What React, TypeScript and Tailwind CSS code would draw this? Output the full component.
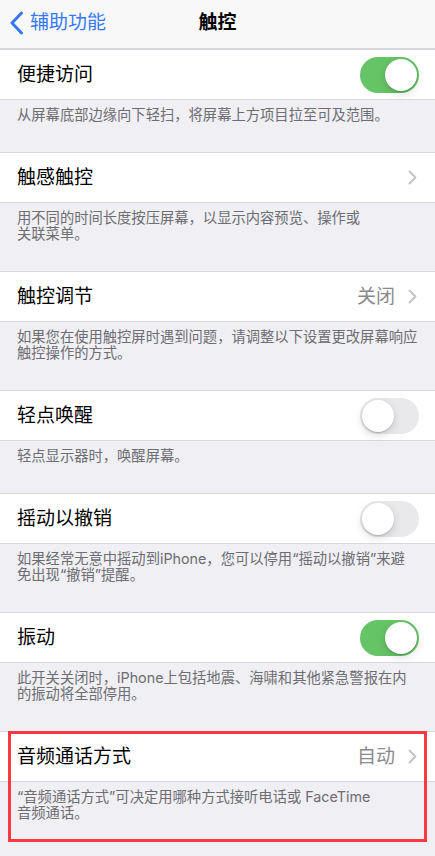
import React from 'react'

interface RowProps {
  title: string
  value?: string
  chevron?: boolean
  toggle?: boolean
}

interface SectionProps extends RowProps {
  lines: string[]
}

function Chevron(): React.JSX.Element {
  return (
    <svg width="9" height="15" viewBox="0 0 9 15" fill="none" aria-hidden="true">
      <path
        d="M1.5 1.5 L7.5 7.5 L1.5 13.5"
        stroke="#c4c4c7"
        strokeWidth="2"
        strokeLinecap="round"
        strokeLinejoin="round"
      />
    </svg>
  )
}

function Toggle({ on }: { on: boolean }): React.JSX.Element {
  return (
    <div
      className={
        on
          ? 'flex h-[36px] w-[59px] items-center justify-end rounded-full bg-[#65c466] p-[2px]'
          : 'flex h-[36px] w-[59px] items-center justify-start rounded-full bg-[#e9e9eb] p-[2px]'
      }
    >
      <div className="h-[32px] w-[32px] rounded-full bg-white shadow-[0_3px_8px_rgba(0,0,0,0.15),0_1px_1px_rgba(0,0,0,0.16)]" />
    </div>
  )
}

function Row({ title, value, chevron, toggle }: RowProps): React.JSX.Element {
  return (
    <div className="flex h-[51px] items-center border-y border-[#d9d9dd] bg-white pl-[17px] pr-[16px]">
      <span className="flex-1 pt-[2px] text-[19px] text-black">{title}</span>
      {value && (
        <span className="mr-[13px] pt-[2px] text-[19px] text-[#8a8a8e]">
          {value}
        </span>
      )}
      {chevron && (
        <span className="mr-[2px] flex items-center">
          <Chevron />
        </span>
      )}
      {toggle !== undefined && <Toggle on={toggle} />}
    </div>
  )
}

function Section({ lines, ...row }: SectionProps): React.JSX.Element {
  return (
    <section>
      <Row {...row} />
      <div className="px-[17px] pb-[29px] pt-[7px] text-[14.3px] leading-[16px] text-[#6d6d72]">
        {lines.map((line) => (
          <div key={line} className="whitespace-nowrap">
            {line}
          </div>
        ))}
      </div>
    </section>
  )
}

export default function App(): React.JSX.Element {
  return (
    <div className="min-h-screen w-[435px] bg-[#efeff4] font-['Inter','Noto_Sans_CJK_SC',sans-serif]">
      {/* navigation bar */}
      <header className="relative flex h-[49px] items-center border-b border-[#d9d9dd] bg-[#f8f8f9] pb-[2px]">
        <div className="flex items-center pl-[10px] text-[19px] text-[#3478f6]">
          <svg width="14" height="24" viewBox="0 0 14 24" fill="none" aria-hidden="true">
            <path
              d="M11.5 2 L2 12 L11.5 22"
              stroke="#3478f6"
              strokeWidth="3"
              strokeLinecap="round"
              strokeLinejoin="round"
            />
          </svg>
          <span className="ml-[6px]">辅助功能</span>
        </div>
        <h1 className="absolute left-1/2 -translate-x-1/2 text-[19px] font-semibold text-black">
          触控
        </h1>
      </header>

      <Section
        title="便捷访问"
        toggle={true}
        lines={['从屏幕底部边缘向下轻扫，将屏幕上方项目拉至可及范围。']}
      />
      <Section
        title="触感触控"
        chevron
        lines={['用不同的时间长度按压屏幕，以显示内容预览、操作或', '关联菜单。']}
      />
      <Section
        title="触控调节"
        value="关闭"
        chevron
        lines={['如果您在使用触控屏时遇到问题，请调整以下设置更改屏幕响应', '触控操作的方式。']}
      />
      <Section
        title="轻点唤醒"
        toggle={false}
        lines={['轻点显示器时，唤醒屏幕。']}
      />
      <Section
        title="摇动以撤销"
        toggle={false}
        lines={['如果经常无意中摇动到iPhone，您可以停用“摇动以撤销”来避', '免出现“撤销”提醒。']}
      />
      <Section
        title="振动"
        toggle={true}
        lines={['此开关关闭时，iPhone上包括地震、海啸和其他紧急警报在内', '的振动将全部停用。']}
      />
      <div className="relative">
        <Section
          title="音频通话方式"
          value="自动"
          chevron
          lines={['“音频通话方式”可决定用哪种方式接听电话或 FaceTime', '音频通话。']}
        />
        {/* highlight frame */}
        <div className="pointer-events-none absolute left-[8px] top-0 h-[111px] w-[419px] border-[3px] border-[#fa3a3e]" />
      </div>
    </div>
  )
}
